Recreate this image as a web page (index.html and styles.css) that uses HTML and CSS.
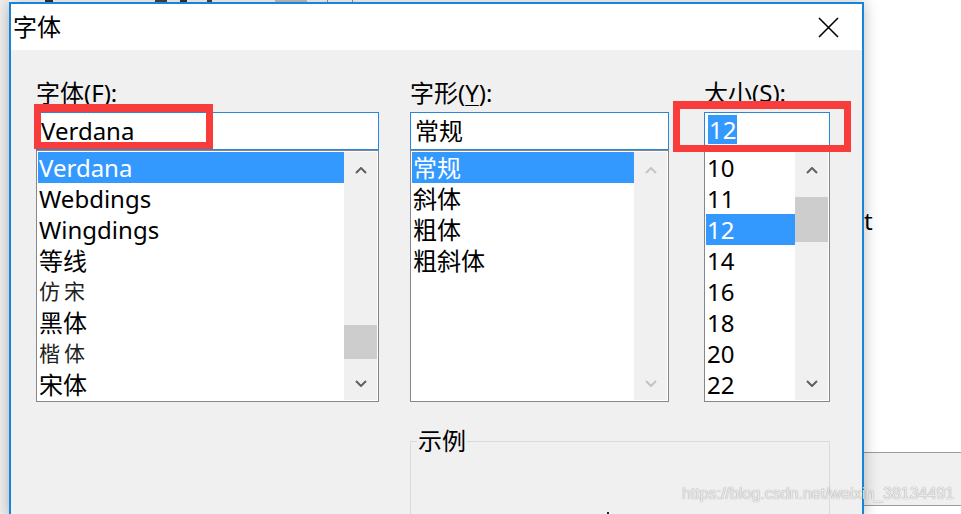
FILE: index.html
```html
<!DOCTYPE html>
<html lang="zh-CN">
<head>
<meta charset="utf-8">
<title>字体</title>
<link rel="stylesheet" href="styles.css">
</head>
<body>
<div class="desktop">
  <div class="bg-left">
    <div class="bg-top">
      <span class="tk tk1"></span>
      <span class="tk tk2"></span>
      <span class="tk tk3"></span>
      <span class="tk tk4"></span>
      <span class="tk tk5"></span>
      <span class="tk tk6"></span>
      <span class="tk tk7"></span>
    </div>
  </div>
  <div class="bg-right">
    <div class="bg-text">t</div>
    <div class="bg-bar"></div>
  </div>
</div>

<div class="dialog">
  <div class="titlebar">
    <span class="title">字体</span>
    <svg class="close" viewBox="0 0 21 21" aria-label="关闭">
      <path d="M1 1 L20 20 M20 1 L1 20" stroke="#000" stroke-width="1.6" fill="none"/>
    </svg>
  </div>
  <div class="dbody">
    <div class="col c1">
      <div class="label">字体(<span class="ak">F</span>):</div>
      <div class="input">Verdana</div>
      <div class="list">
        <div class="rows">
          <div class="row sel">Verdana</div>
          <div class="row">Webdings</div>
          <div class="row">Wingdings</div>
          <div class="row">等线</div>
          <div class="row fs">仿宋</div>
          <div class="row">黑体</div>
          <div class="row fs">楷体</div>
          <div class="row">宋体</div>
        </div>
        <div class="sb">
          <div class="sb-btn up"><svg viewBox="0 0 12 7"><polyline points="1,6 6,1 11,6"/></svg></div>
          <div class="sb-track"><div class="sb-thumb" style="margin-top:139px;height:34px"></div></div>
          <div class="sb-btn down"><svg viewBox="0 0 12 7"><polyline points="1,1 6,6 11,1"/></svg></div>
        </div>
      </div>
    </div>

    <div class="col c2">
      <div class="label">字形(<span class="ak">Y</span>):</div>
      <div class="input">常规</div>
      <div class="list">
        <div class="rows">
          <div class="row sel">常规</div>
          <div class="row">斜体</div>
          <div class="row">粗体</div>
          <div class="row">粗斜体</div>
        </div>
        <div class="sb off">
          <div class="sb-btn up"><svg viewBox="0 0 12 7"><polyline points="1,6 6,1 11,6"/></svg></div>
          <div class="sb-track"></div>
          <div class="sb-btn down"><svg viewBox="0 0 12 7"><polyline points="1,1 6,6 11,1"/></svg></div>
        </div>
      </div>
    </div>

    <div class="col c3">
      <div class="label">大小(<span class="ak">S</span>):</div>
      <div class="input sizein"><span class="seltext">12</span></div>
      <div class="list">
        <div class="rows">
          <div class="row">10</div>
          <div class="row">11</div>
          <div class="row sel">12</div>
          <div class="row">14</div>
          <div class="row">16</div>
          <div class="row">18</div>
          <div class="row">20</div>
          <div class="row">22</div>
        </div>
        <div class="sb">
          <div class="sb-btn up"><svg viewBox="0 0 12 7"><polyline points="1,6 6,1 11,6"/></svg></div>
          <div class="sb-track"><div class="sb-thumb" style="margin-top:11px;height:45px"></div></div>
          <div class="sb-btn down"><svg viewBox="0 0 12 7"><polyline points="1,1 6,6 11,1"/></svg></div>
        </div>
      </div>
    </div>

    <fieldset class="sample">
      <legend>示例</legend>
      <div class="preview"><span class="peek"></span></div>
    </fieldset>
  </div>
</div>

<div class="mark mark-font"></div>
<div class="mark mark-size"></div>
<div class="watermark">https://blog.csdn.net/weixin_38134491</div>
</body>
</html>
```

FILE: styles.css
```css
* { box-sizing: border-box; }
html, body { margin: 0; padding: 0; }
body {
  width: 961px;
  height: 514px;
  overflow: hidden;
  position: relative;
  background: #fff;
  font-family: "Noto Sans", "Noto Sans CJK SC", sans-serif;
  font-size: 24px;
  color: #000;
}

/* background window */
.desktop { display: flex; height: 514px; }
.bg-left { width: 864px; background: #f0f0f0; }
.bg-top { display: flex; height: 2px; margin-left: 9px; background: #fff; }
.tk { height: 2px; flex: none; }
.tk1 { margin-left: 36px; width: 8px; background: #333; }
.tk2 { margin-left: 102px; width: 12px; background: #444; }
.tk3 { margin-left: 13px; width: 7px; background: #333; }
.tk4 { margin-left: 20px; width: 5px; background: #444; }
.tk5 { margin-left: 63px; width: 32px; background: #c6c6c6; }
.tk6 { margin-left: 20px; width: 1px; background: #999; }
.tk7 { margin-left: 24px; width: 1px; background: #999; }
.bg-right { flex: 1; display: flex; flex-direction: column; background: #fff; }
.bg-text { margin-top: 205px; height: 31px; line-height: 31px; }
.bg-bar {
  margin-top: 216px;
  height: 54px;
  border-top: 1px solid #9a9a9a;
  border-bottom: 1px solid #9a9a9a;
  background: #f0f0f0;
}

/* dialog window */
.dialog {
  position: absolute;
  left: 9px;
  top: 2px;
  width: 855px;
  height: 516px;
  border: 2px solid #1883d7;
  background: #f0f0f0;
  box-shadow: 0 0 14px rgba(0, 0, 0, 0.28);
  display: flex;
  flex-direction: column;
  overflow: hidden;
}
.titlebar {
  height: 46px;
  flex: none;
  background: #fff;
  display: flex;
  align-items: center;
  padding: 0 23px 0 2px;
}
.title { flex: 1; line-height: 46px; }
.close { width: 21px; height: 21px; display: block; }

.dbody {
  display: grid;
  grid-template-columns: 343px 31px 259px 35px 126px;
  align-content: start;
  padding: 29px 0 0 25px;
}
.col { display: flex; flex-direction: column; }
.c1 { grid-column: 1; }
.c2 { grid-column: 3; }
.c3 { grid-column: 5; }

.label { height: 28px; line-height: 28px; margin-bottom: 5px; white-space: nowrap; }
.ak { text-decoration: underline; text-decoration-thickness: 1px; text-underline-offset: 3px; }

.input {
  height: 38px;
  border: 1px solid #2a86d8;
  background: #fff;
  line-height: 36px;
  padding-left: 4px;
  white-space: nowrap;
}
.sizein { display: flex; align-items: flex-start; padding: 2px 0 0 3px; }
.seltext {
  display: inline-block;
  height: 29px;
  line-height: 29px;
  padding: 0 1px;
  background: #3399ff;
  color: #fff;
}

.list {
  height: 252px;
  border: 1px solid #828790;
  background: #fff;
  padding: 1px;
  display: flex;
}
.rows { flex: 1; min-width: 0; }
.row { height: 31px; line-height: 31px; padding-left: 1px; white-space: nowrap; }
.row.sel { background: #3399ff; color: #fff; }
.row.fs { font-size: 21px; letter-spacing: 4px; color: #222; }

.sb {
  width: 33px;
  flex: none;
  background: #f0f0f0;
  display: flex;
  flex-direction: column;
  color: #606060;
}
.sb.off { color: #c4c4c4; }
.sb-btn { height: 34px; flex: none; display: flex; align-items: center; justify-content: center; }
.sb-btn.up { padding-top: 3px; }
.sb-btn svg { width: 12px; height: 7px; display: block; }
.sb-btn polyline { fill: none; stroke: currentColor; stroke-width: 2; }
.sb-track { flex: 1; }
.sb-thumb { background: #cdcdcd; }

.sample {
  grid-column: 3 / 6;
  margin: 25px 0 0;
  padding: 0;
  min-width: 0;
  height: 200px;
  border: 1px solid #dadada;
}
.sample legend { margin-left: 6px; padding: 0 1px; line-height: 28px; }
.preview { display: flex; padding: 57px 0 0 196px; }
.peek { width: 2px; height: 4px; background: #222; }

/* annotation overlays */
.mark { position: absolute; border: 7px solid #f83b3b; }
.mark-font { left: 34px; top: 104px; width: 179px; height: 45px; border-top-width: 8px; }
.mark-size { left: 673px; top: 101px; width: 178px; height: 51px; border-top-width: 8px; }

.watermark {
  position: absolute;
  left: 682px;
  top: 486px;
  font-family: "Liberation Sans", Arial, sans-serif;
  font-size: 16px;
  line-height: 16px;
  color: rgba(255, 255, 255, 0.85);
  text-shadow: 0 0 1px rgba(0, 0, 0, 0.35), 0 0 1px rgba(0, 0, 0, 0.2);
  white-space: nowrap;
}
```
